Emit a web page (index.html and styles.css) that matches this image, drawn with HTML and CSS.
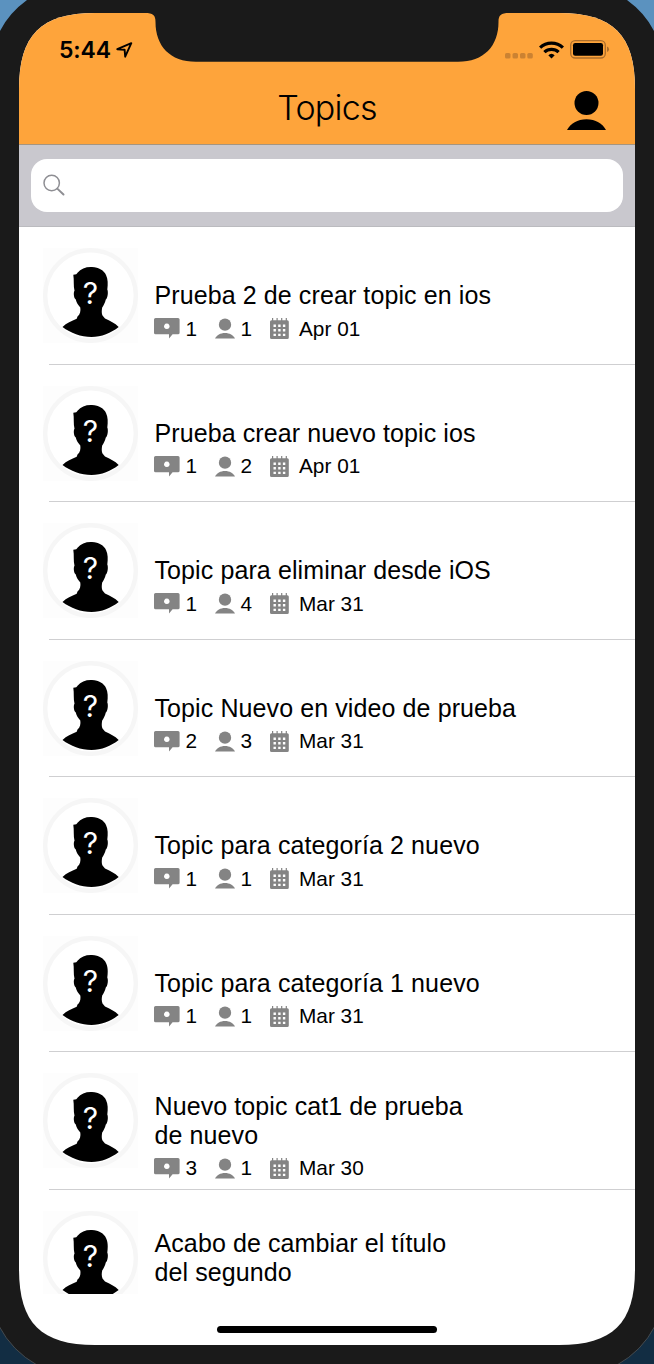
FILE: index.html
```html
<!DOCTYPE html>
<html lang="es">
<head>
<meta charset="utf-8">
<title>Topics</title>
<link rel="stylesheet" href="styles.css">
</head>
<body>
<svg class="defs" aria-hidden="true">
  <symbol id="avatar" viewBox="0 0 95 95">
    <rect width="95" height="95" fill="#fdfdfd"/>
    <circle cx="47.5" cy="47.5" r="45.3" fill="#fff" stroke="#f6f6f6" stroke-width="4.4"/>
    <path d="M30.300 26.700C33 26.700 34 26 34.500 24.800C38 20.500 43 18.700 49 19C56 19.200 61 22.500 63 27C65 31 65 36 64.300 41.500C65.500 44 64.700 50.500 62.800 51.500C62 55 60.500 57.500 59.200 59.500C58.500 63 58.600 65.500 59.500 67.500L62 70.500C67 73 72 75 75.700 79C68 85 58.500 89 48.500 89C38 89 27.500 85 19.500 79C23.500 75 28.500 73 33.700 70.800L34.500 68.500C37.200 66.500 37.800 63 37.300 59.500C35 57 33.500 54.500 32.800 51.500C30.800 50.500 30.200 44.500 31.500 42.800C30.300 38 31.200 32 30.300 26.700Z"/>
    <text class="mark" x="47.4" y="56.200" text-anchor="middle">?</text>
  </symbol>
  <symbol id="comment" viewBox="0 0 26 21">
    <path fill="#848484" fill-rule="evenodd" d="M1.600 0H24a1.600 1.600 0 0 1 1.600 1.600V14.700a1.600 1.600 0 0 1-1.600 1.600H18.600L15 20.500V16.300H1.600A1.600 1.600 0 0 1 0 14.700V1.600A1.600 1.600 0 0 1 1.600 0ZM12.800 5.500a2.800 2.800 0 1 0 .01 0Z"/>
  </symbol>
  <symbol id="person" viewBox="0 0 39 39">
    <circle cx="19.500" cy="12" r="12"/>
    <path d="M0 39C3.500 32.500 10.500 28.300 19.500 28.300S35.500 32.500 39 39Z"/>
  </symbol>
  <symbol id="calendar" viewBox="0 0 19 21">
    <path fill="#848484" d="M1.500 2.200H17.300a1.500 1.500 0 0 1 1.500 1.500V19.500a1.500 1.500 0 0 1-1.500 1.500H1.500A1.500 1.500 0 0 1 0 19.500V3.700a1.500 1.500 0 0 1 1.500-1.500Z"/>
    <path stroke="#848484" stroke-width="1.200" d="M2.600 0V4M7.100 0V4M11.700 0V4M16.300 0V4"/>
    <path stroke="#fff" stroke-width="2.400" stroke-dasharray="2.400 2.300" d="M3.500 7.700H15.500M3.500 12.300H15.500M3.500 16.900H15.500"/>
  </symbol>
</svg>

<svg class="desktop" viewBox="0 0 654 1364" aria-hidden="true">
  <rect width="654" height="1364" fill="#1a1a1a"/>
  <path fill="#5b92bf" d="M0 0H27Q9 13 0 31ZM627 0H654V31Q645 13 627 0Z"/>
  <path fill="#122d43" stroke="#454a4e" d="M-1 1326Q12 1351 37 1365H-1ZM655 1326Q642 1351 617 1365H655Z"/>
</svg>

<main class="screen">
  <header class="header">
    <div class="status">
      <span class="time">5:44</span>
      <svg class="location" viewBox="0 0 17 16"><path d="M1.300 7.200L15.300 1.200L9.200 14.700L8.600 7.700Z" fill="none" stroke="#000" stroke-width="1.900" stroke-linejoin="round"/></svg>
      <svg class="signal" viewBox="0 0 28 6"><g fill="#cb8232"><rect width="5.500" height="5.500" rx="1.600"/><rect x="7.500" width="5.500" height="5.500" rx="1.600"/><rect x="15" width="5.500" height="5.500" rx="1.600"/><rect x="22.300" width="5.500" height="5.500" rx="1.600"/></g></svg>
      <svg class="wifi" viewBox="0 0 25 18"><g fill="none" stroke="#000" stroke-width="3.200"><path d="M1.100 6.700A16.300 16.300 0 0 1 23.900 6.700"/><path d="M5.400 11.200A10.200 10.200 0 0 1 19.600 11.200"/></g><path d="M9.300 14.300Q12.500 11.300 15.700 14.300L12.500 17.600Z"/></svg>
      <svg class="battery" viewBox="0 0 40 19"><rect x=".7" y=".7" width="34.600" height="17.300" rx="4.500" fill="none" stroke="#ac6e2b" stroke-width="1.300"/><rect x="3" y="3" width="30" height="12.700" rx="2.200"/><path fill="#ac6e2b" d="M37 6.500Q39 7.200 39 9.300T37 12Z"/></svg>
    </div>
    <div class="nav">
      <h1 class="heading">Topics</h1>
      <svg class="profile"><use href="#person"/></svg>
    </div>
  </header>
  <div class="search">
    <div class="field">
      <svg class="glass" viewBox="0 0 22 22"><g fill="none" stroke="#8e8e93" stroke-linecap="round"><circle cx="8.700" cy="9" r="7.700" stroke-width="1.500"/><path stroke-width="2" d="M14.300 14.600L20.500 20.500"/></g></svg>
    </div>
  </div>
  <ul class="topics" id="topics"></ul>
  <div class="home"></div>
  <div class="notch"><svg viewBox="0 0 364 50"><path fill="#1a1a1a" d="M0 0H364C356 0 353.500 2 353.500 9C353.500 33 339 48.800 313 48.800H51C25 48.800 10.500 33 10.500 9C10.500 2 8 0 0 0Z"/></svg></div>
</main>
<script src="app.js"></script>
</body>
</html>
```
FILE: styles.css
```css
* { box-sizing: border-box; }
body {
  margin: 0;
  width: 654px;
  height: 1364px;
  overflow: hidden;
  padding: 13px 19px 19px;
  font-family: "Liberation Sans", Arial, sans-serif;
  color: #000;
}
svg { display: block; flex: none; }
.defs { display: none; }
.desktop { position: absolute; inset: 0; width: 654px; height: 1364px; }
.screen {
  position: relative;
  display: flex;
  flex-direction: column;
  width: 616px;
  height: 1332px;
  background: #fff;
  clip-path: path("M0 76C0 22 22 0 76 0H540C594 0 616 22 616 76V1256C616 1310 594 1332 540 1332H76C22 1332 0 1310 0 1256Z");
}
.header {
  height: 132px;
  flex: none;
  background: #fea43b;
  border-bottom: 1px solid #a59580;
}
.status {
  display: flex;
  align-items: center;
  height: 73px;
  padding: 0 25px 0 40px;
}
.time {
  width: 57px;
  padding-top: 1px;
  font: 600 23px/28px Inter, sans-serif;
  letter-spacing: -.1px;
}
.location { width: 17px; height: 16px; }
.signal { width: 28px; height: 6px; margin: 12px 6px 0 auto; }
.wifi { width: 25px; height: 18px; margin-right: 6px; }
.battery { width: 40px; height: 19px; }
.nav {
  display: grid;
  grid-template-columns: 1fr auto 1fr;
  align-items: center;
  height: 44px;
  padding-right: 29px;
  padding-left: 29px;
}
.heading {
  grid-column: 2;
  margin: 0;
  font: 300 34px/44px Inter, sans-serif;
  letter-spacing: -.8px;
}
.profile { width: 39px; height: 39px; justify-self: end; margin-top: 4px; }
.search {
  height: 82px;
  flex: none;
  padding: 14px 12px 0;
  background: #c9c8ce;
  border-bottom: 1px solid #bbbbbf;
}
.field {
  display: flex;
  align-items: center;
  height: 53px;
  padding: 0 0 2px 12px;
  border-radius: 16px;
  background: #fff;
}
.glass { width: 22px; height: 22px; }
.topics {
  height: 1067px;
  flex: none;
  margin: 0;
  padding: 0;
  list-style: none;
  overflow: hidden;
}
.topic {
  display: flex;
  height: 137.5px;
  padding-left: 24px;
  background: linear-gradient(#cfcfd1, #cfcfd1) 30px 100% / 100% 1px no-repeat;
}
.avatar { width: 95px; height: 95px; margin-top: 21px; }
.mark { font: 400 30px Inter, sans-serif; fill: #fff; }
.details {
  display: flex;
  flex-direction: column;
  justify-content: center;
  padding: 37px 0 0 16.5px;
  height: 137px;
}
.title {
  margin: 0;
  font-size: 25px;
  font-weight: 400;
  line-height: 29px;
  letter-spacing: .1px;
  white-space: pre-line;
}
.meta {
  display: flex;
  align-items: center;
  height: 37px;
  margin-left: -.5px;
  font-size: 20.8px;
}
.comment { width: 26px; height: 21px; margin-right: 5.5px; }
.people { width: 20px; height: 21px; margin-right: 5.5px; fill: #848484; }
.count { width: 29.5px; }
.calendar { width: 19px; height: 21px; margin-right: 10px; }
.home {
  width: 220px;
  height: 7px;
  margin: 32px auto 0;
  border-radius: 4px;
  background: #000;
}
.notch { position: absolute; top: 0; left: 126px; width: 364px; }
```
FILE: app.js
```js
const topics = [
  ["Prueba 2 de crear topic en ios", 1, 1, "Apr 01"],
  ["Prueba crear nuevo topic ios", 1, 2, "Apr 01"],
  ["Topic para eliminar desde iOS", 1, 4, "Mar 31"],
  ["Topic Nuevo en video de prueba", 2, 3, "Mar 31"],
  ["Topic para categoría 2 nuevo", 1, 1, "Mar 31"],
  ["Topic para categoría 1 nuevo", 1, 1, "Mar 31"],
  ["Nuevo topic cat1 de prueba\nde nuevo", 3, 1, "Mar 30"],
  ["Acabo de cambiar el título\ndel segundo"]
];

const meta = (comments, people, date) => `
  <svg class="comment"><use href="#comment"/></svg><span class="count">${comments}</span>
  <svg class="people"><use href="#person"/></svg><span class="count">${people}</span>
  <svg class="calendar"><use href="#calendar"/></svg><span>${date}</span>`;

document.getElementById("topics").innerHTML = topics.map(([title, ...info]) => `
  <li class="topic">
    <svg class="avatar"><use href="#avatar"/></svg>
    <div class="details">
      <h2 class="title">${title}</h2>
      <div class="meta">${info.length ? meta(...info) : ""}</div>
    </div>
  </li>`).join("");
```
